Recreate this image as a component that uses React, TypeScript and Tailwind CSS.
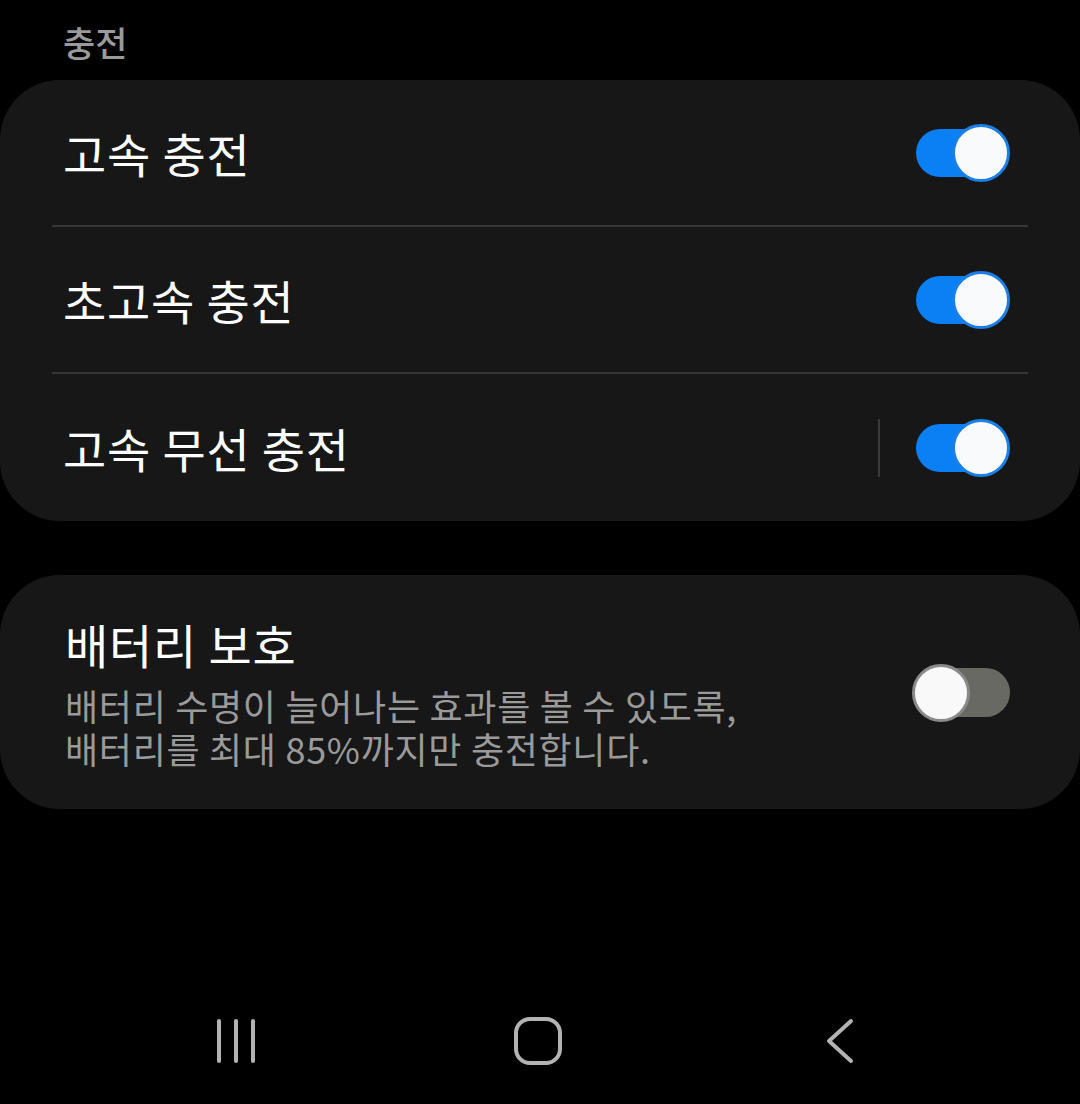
import React from "react";

const font = { fontFamily: '"Noto Sans CJK KR", "Noto Sans", sans-serif' };

type ToggleProps = { on: boolean };

const Toggle: React.FC<ToggleProps> = ({ on }) => {
  if (on) {
    return (
      <div className="relative w-[96px] h-[58px] shrink-0">
        <div className="absolute left-[2px] right-[4px] top-[5px] h-[48px] rounded-full bg-[#0b7ff4]" />
        <div className="absolute right-0 top-0 w-[58px] h-[58px] rounded-full bg-[#f9fafb] border-[3px] border-[#1a7fe6]" />
      </div>
    );
  }
  return (
    <div className="relative w-[98px] h-[58px] shrink-0">
      <div className="absolute left-[8px] right-0 top-[4px] h-[49px] rounded-full bg-[#686963]" />
      <div className="absolute left-0 top-0 w-[58px] h-[58px] rounded-full bg-[#f9f9f9] border-[3px] border-[#8a8a8a]" />
    </div>
  );
};

const rows = [
  { label: "고속 충전", on: true, sep: false },
  { label: "초고속 충전", on: true, sep: false },
  { label: "고속 무선 충전", on: true, sep: true },
];

const App: React.FC = () => {
  return (
    <div className="w-[1080px] h-[1104px] bg-black flex flex-col overflow-hidden" style={font}>
      {/* section header */}
      <div className="h-[80px] pl-[63px] pt-[4px] flex items-center text-[35px] font-medium text-[#9a9a9a]">
        충전
      </div>

      {/* charging card */}
      <div className="rounded-[60px] bg-[#171717] px-[52px]">
        {rows.map((row, i) => (
          <div
            key={row.label}
            className={`flex items-center h-[147px] pl-[11px] pr-[18px] ${
              i < rows.length - 1 ? "border-b-2 border-[#363636]" : ""
            }`}
          >
            <span className="flex-1 text-[47px] text-white leading-none tracking-[0.8px]">{row.label}</span>
            {row.sep && <div className="w-[2px] h-[58px] bg-[#3a3a3a] mr-[34px]" />}
            <Toggle on={row.on} />
          </div>
        ))}
      </div>

      {/* battery protection card */}
      <div className="mt-[54px] rounded-[60px] bg-[#171717] h-[234px] pl-[65px] pr-[70px] pt-[2px] flex items-center">
        <div className="flex-1 flex flex-col">
          <div className="text-[47px] text-white leading-[56px] tracking-[0.8px]">배터리 보호</div>
          <div className="text-[36px] text-[#9a9a9a] leading-[43px] mt-[12px] tracking-[0.7px]">
            <div>배터리 수명이 늘어나는 효과를 볼 수 있도록,</div>
            <div>배터리를 최대 85%까지만 충전합니다.</div>
          </div>
        </div>
        <Toggle on={false} />
      </div>

      <div className="flex-1" />

      {/* navigation bar */}
      <div className="h-[126px] pr-[5px] flex items-center justify-center">
        <div className="w-[302px] flex justify-center">
          <svg width="40" height="46" viewBox="0 0 40 46" fill="none" stroke="#b3b3b3" strokeWidth="4" strokeLinecap="round">
            <line x1="3" y1="3" x2="3" y2="43" />
            <line x1="20" y1="3" x2="20" y2="43" />
            <line x1="37" y1="3" x2="37" y2="43" />
          </svg>
        </div>
        <div className="w-[302px] flex justify-center">
          <svg width="48" height="48" viewBox="0 0 48 48" fill="none" stroke="#b3b3b3" strokeWidth="4">
            <rect x="2" y="2" width="44" height="44" rx="14" />
          </svg>
        </div>
        <div className="w-[302px] flex justify-center">
          <svg width="30" height="46" viewBox="0 0 30 46" fill="none" stroke="#b3b3b3" strokeWidth="4" strokeLinecap="round" strokeLinejoin="round">
            <polyline points="26,3 4,23 26,43" />
          </svg>
        </div>
      </div>
    </div>
  );
};

export default App;
